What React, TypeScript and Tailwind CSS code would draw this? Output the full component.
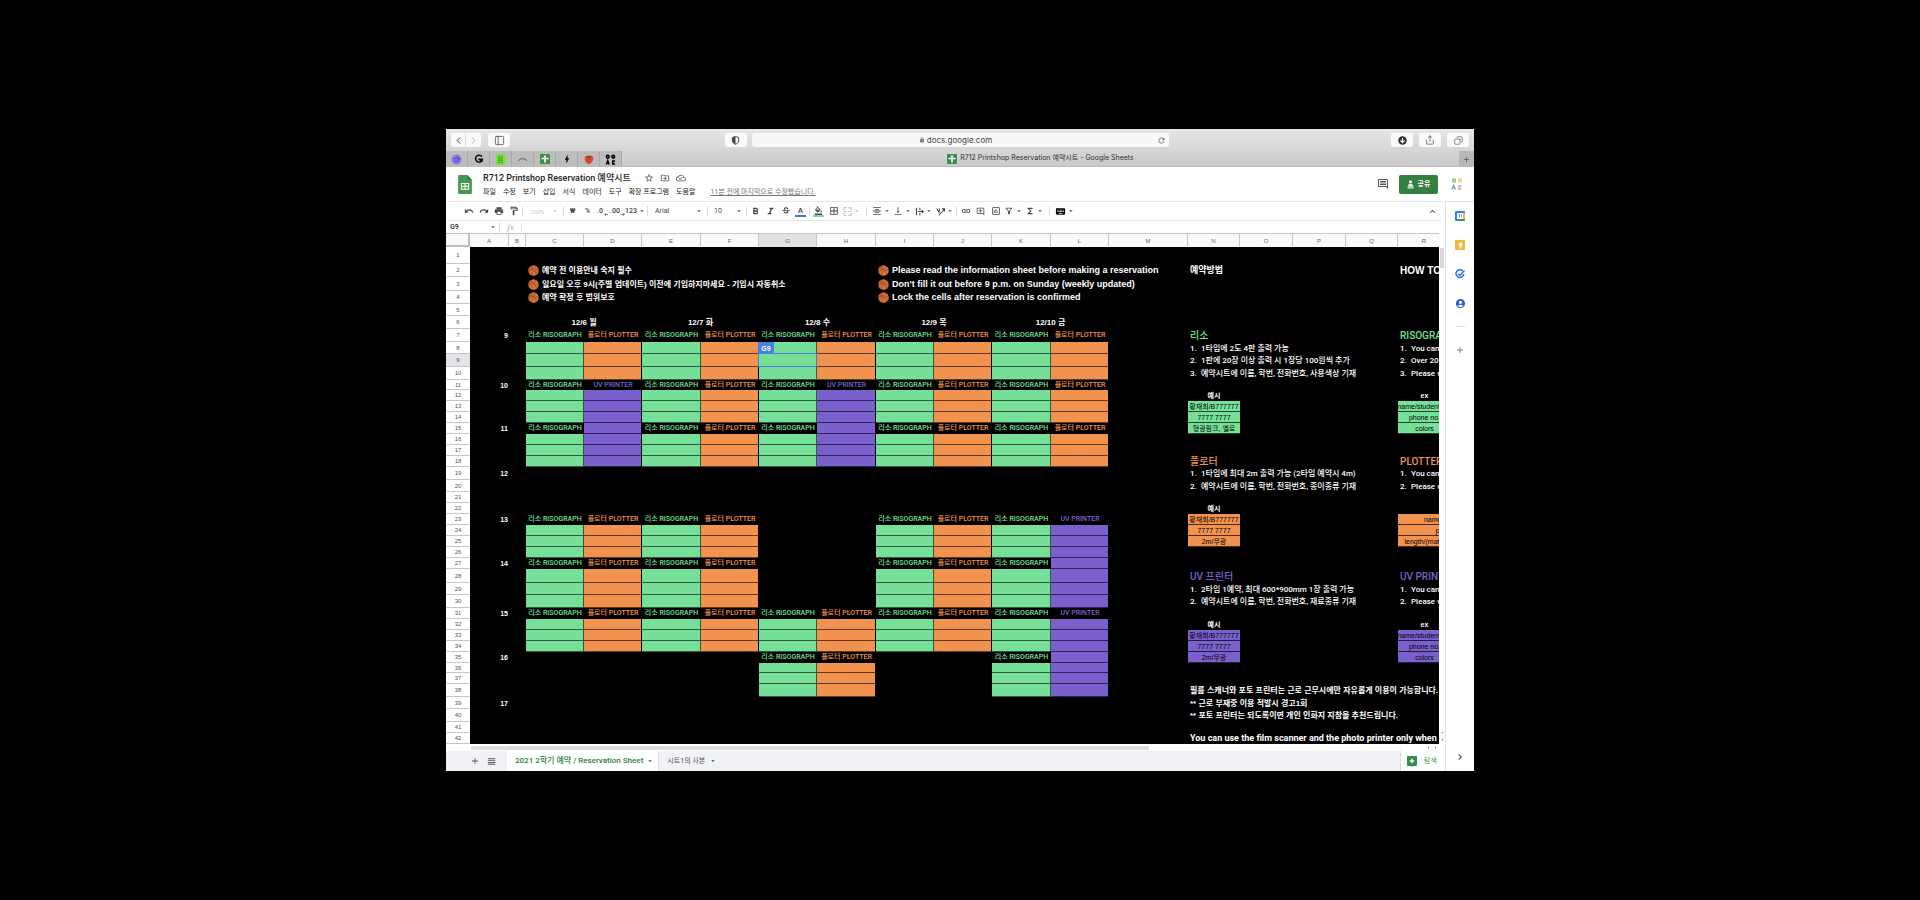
import React from "react";
import {
  MdUndo, MdRedo, MdPrint, MdOutlineFormatPaint, MdFormatBold, MdFormatItalic, MdStrikethroughS,
  MdFormatColorFill, MdBorderAll, MdFormatAlignCenter, MdVerticalAlignBottom, MdLink,
  MdOutlineAddComment, MdOutlineInsertChart, MdOutlineFilterAlt, MdFunctions, MdKeyboard,
  MdStarBorder, MdOutlineDriveFileMove, MdOutlineCloudDone, MdOutlineComment, MdKeyboardArrowUp,
  MdChevronRight, MdAdd, MdViewHeadline, MdArrowDropDown, MdLock, MdRefresh,
  MdAccountCircle, MdLightbulb, MdBolt,
} from "react-icons/md";
import { ChevronLeft, ChevronRight, Share, Copy, PanelLeft } from "lucide-react";

type Align = "left" | "center" | "right";
type Cell = { text?: React.ReactNode; cls?: string; span?: number; align?: Align; selected?: boolean };

const COLS = ["A", "B", "C", "D", "E", "F", "G", "H", "I", "J", "K", "L", "M", "N", "O", "P", "Q", "R", "S"];
const COL_WIDTHS = [39, 17, 58, 58, 59, 58, 58, 59, 58, 58, 59, 58, 79, 52, 53, 53, 52, 53, 53];
const ROW_HEIGHTS = [
  17, 13, 14, 13, 12, 13, 13, 12, 13, 13, 10, 11, 11, 11, 11, 11, 11, 11, 13, 12, 11, 11, 11, 11, 11, 11, 11, 14, 12,
  13, 11, 11, 11, 11, 11, 10, 11, 13, 12, 13, 11, 11,
];

const GREEN = "bg-[#76e099]";
const ORANGE = "bg-[#f2924f]";
const PURPLE = "bg-[#7a60cc]";

const SLOTS: { row: number; plan: string }[] = [
  { row: 7, plan: "rprprprprp" },
  { row: 11, plan: "rurprurprp" },
  { row: 15, plan: "rUrprUrprp" },
  { row: 23, plan: "rprp..rpru" },
  { row: 27, plan: "rprp..rprU" },
  { row: 31, plan: "rprprprpru" },
  { row: 35, plan: "....rp..rU" },
];

const HOURS: [number, string][] = [
  [7, "9"], [11, "10"], [15, "11"], [19, "12"], [23, "13"], [27, "14"], [31, "15"], [35, "16"], [39, "17"],
];

const Basketball = () => (
  <svg viewBox="0 0 20 20" className="size-[11px] shrink-0">
    <circle cx="10" cy="10" r="9.5" fill="#d9713a" />
    <path d="M3 4c5 1 11 6 13 13M1 11c6-2 12-4 14-9M6 18c0-6 5-10 13-9M8 1c-1 5-4 8-7 8" fill="none" stroke="#8a4424" strokeWidth="1.2" />
  </svg>
);

const Note = ({ children, size = "text-[9px]" }: { children: React.ReactNode; size?: string }) => (
  <span className={"flex items-center gap-[3px] pl-[2px] leading-[11px] font-bold " + size}>
    <Basketball />
    {children}
  </span>
);

const cells: Record<string, Cell> = {};
const put = (ref: string, cell: Cell) => {
  cells[ref] = cell;
};

HOURS.forEach(([row, text]) => put("A" + row, { text, align: "right", cls: "text-[7px] font-bold pr-[1px]" }));

const LABEL = "font-['Roboto','Noto_Sans_CJK_KR',sans-serif] text-[7px] font-medium ";

SLOTS.forEach(({ row, plan }) => {
  plan.split("").forEach((kind, i) => {
    const col = COLS[i + 2];
    if (kind === ".") return;
    if (kind === "r") put(col + row, { text: "리소 RISOGRAPH", align: "center", cls: LABEL + "text-[#76e099]" });
    if (kind === "p") put(col + row, { text: "플로터 PLOTTER", align: "center", cls: LABEL + "text-[#f2924f]" });
    if (kind === "u") put(col + row, { text: "UV PRINTER", align: "center", cls: LABEL + "text-[#7a60cc]" });
    if (kind === "U") put(col + row, { cls: PURPLE + " border-b border-r border-b-black/60 border-r-black" });
    [1, 2, 3].forEach((n) => {
      const fill =
        kind === "r"
          ? GREEN + " border-b border-r border-black/60"
          : (kind === "p" ? ORANGE : PURPLE) + " border-b border-r border-b-black/60 border-r-black";
      put(col + (row + n), { cls: fill, selected: col + (row + n) === "G9" });
    });
  });
});

["12/6 월", "12/7 화", "12/8 수", "12/9 목", "12/10 금"].forEach((text, i) =>
  put(COLS[2 + i * 2] + 6, { text, span: 2, align: "center", cls: "text-[8px] font-bold" }),
);

put("C2", { text: <Note size="text-[8px]">예약 전 이용안내 숙지 필수</Note> });
put("C3", { text: <Note size="text-[8px]">일요일 오후 9시(주별 업데이트) 이전에 기입하지마세요 - 기입시 자동취소</Note> });
put("C4", { text: <Note size="text-[8px]">예약 확정 후 범위보호</Note> });
put("I2", { text: <Note>Please read the information sheet before making a reservation</Note> });
put("I3", { text: <Note>Don't fill it out before 9 p.m. on Sunday (weekly updated)</Note> });
put("I4", { text: <Note>Lock the cells after reservation is confirmed</Note> });

const HEAD = "font-['Roboto','Noto_Sans_CJK_KR',sans-serif] text-[10px] font-medium pl-[2px]";
const LINE = "font-['Roboto','Noto_Sans_CJK_KR',sans-serif] text-[8px] font-medium pl-[2px]";
const BOLD = "text-[8px] font-bold pl-[2px]";
const item = (n: number, text: string) => (
  <span className="flex">
    <span className="w-[11px] shrink-0">{n}.</span>
    {text}
  </span>
);

put("N2", { text: "예약방법", cls: "text-[9px] font-bold pl-[2px]" });
put("R2", { text: "HOW TO", cls: "text-[10px] font-bold pl-[2px]" });

put("N7", { text: "리소", cls: HEAD + " text-[#76e099]" });
put("N8", { text: item(1, "1타임에 2도 4판 출력 가능"), cls: LINE });
put("N9", { text: item(2, "1판에 20장 이상 출력 시 1장당 100원씩 추가"), cls: LINE });
put("N10", { text: item(3, "예약시트에 이름, 학번, 전화번호, 사용색상 기재"), cls: LINE });
put("R7", { text: "RISOGRAPH", cls: HEAD + " text-[#76e099]" });
put("R8", { text: item(1, "You can print"), cls: LINE });
put("R9", { text: item(2, "Over 20 sheets"), cls: LINE });
put("R10", { text: item(3, "Please write"), cls: LINE });

put("N18", { text: "플로터", cls: HEAD + " text-[#f2924f]" });
put("N19", { text: item(1, "1타임에 최대 2m 출력 가능 (2타임 예약시 4m)"), cls: LINE });
put("N20", { text: item(2, "예약시트에 이름, 학번, 전화번호, 종이종류 기재"), cls: LINE });
put("R18", { text: "PLOTTER", cls: HEAD + " text-[#f2924f]" });
put("R19", { text: item(1, "You can print"), cls: LINE });
put("R20", { text: item(2, "Please write"), cls: LINE });

put("N28", { text: "UV 프린터", cls: HEAD + " text-[#7a60cc]" });
put("N29", { text: item(1, "2타임 1예약, 최대 600*900mm 1장 출력 가능"), cls: LINE });
put("N30", { text: item(2, "예약시트에 이름, 학번, 전화번호, 재료종류 기재"), cls: LINE });
put("R28", { text: "UV PRINTER", cls: HEAD + " text-[#7a60cc]" });
put("R29", { text: item(1, "You can print"), cls: LINE });
put("R30", { text: item(2, "Please write"), cls: LINE });

const SAMPLE = "text-[7px] text-black border-b border-black/70 ";
const example = (row: number, fill: string, ko: string[], en: string[], enSpan: number) => {
  put("N" + row, { text: "예시", align: "center", cls: "text-[7px] font-bold" });
  put("R" + row, { text: "ex", align: "center", span: enSpan, cls: "text-[7px] font-bold" });
  ko.forEach((text, i) => put("N" + (row + 1 + i), { text, align: "center", cls: SAMPLE + fill }));
  en.forEach((text, i) => put("R" + (row + 1 + i), { text, align: "center", span: enSpan, cls: SAMPLE + fill }));
};
example(12, GREEN, ["황재희/B777777", "7777 7777", "형광핑크, 옐로"], ["name/student no.", "phone no.", "colors"], 1);
example(22, ORANGE, ["황재희/B777777", "7777 7777", "2m/무광"], ["name/student no.", "phone no.", "length/(matte or glossy paper)"], 2);
put("R22", {});
example(32, PURPLE, ["황재희/B777777", "7777 7777", "2m/무광"], ["name/student no.", "phone no.", "colors"], 1);

put("N38", { text: "필름 스캐너와 포토 프린터는 근로 근무시에만 자유롭게 이용이 가능합니다.", cls: BOLD });
put("N39", { text: "** 근로 부재중 이용 적발시 경고1회", cls: BOLD });
put("N40", { text: "** 포토 프린터는 되도록이면 개인 인화지 지참을 추천드립니다.", cls: BOLD });
put("N42", {
  text: "You can use the film scanner and the photo printer only when assistants are here.",
  cls: "font-['Roboto',sans-serif] text-[9px] font-bold pl-[2px]",
});

const ALIGN: Record<Align, string> = { left: "text-left", center: "text-center", right: "text-right" };

function Row({ n }: { n: number }) {
  const out: React.ReactNode[] = [];
  for (let i = 0; i < COLS.length; i++) {
    const cell = cells[COLS[i] + n] ?? {};
    out.push(
      <td
        key={COLS[i]}
        colSpan={cell.span ?? 1}
        className={
          "p-0 leading-[9px] whitespace-nowrap " + ALIGN[cell.align ?? "left"] + " " + (cell.cls ?? "") + (cell.selected ? " relative" : "")
        }
      >
        {cell.align === "center" ? <span className="-mx-10 block">{cell.text}</span> : cell.text}
        {cell.selected && (
          <>
            <span className="absolute -inset-px border border-[#3f7fd9]" />
            <span className="absolute -left-px bottom-full grid h-[12px] w-[16px] place-items-center bg-[#4a80e0] text-[7px] font-bold text-white">G9</span>
          </>
        )}
      </td>,
    );
    i += (cell.span ?? 1) - 1;
  }
  return (
    <tr style={{ height: ROW_HEIGHTS[n - 1] }}>
      <th
        scope="row"
        className={
          "border-b border-[#c4c6c9] p-0 text-center text-[6px] leading-[8px] font-normal text-[#555] " + (n === 9 ? "bg-[#e3e5e9]" : "bg-white")
        }
      >
        {n}
      </th>
      {out}
    </tr>
  );
}

function Sheet() {
  return (
    <div className="min-w-0 flex-1 overflow-hidden bg-black">
      <table className="w-[1058px] table-fixed border-separate border-spacing-0 font-['Liberation_Sans','Noto_Sans_CJK_KR',sans-serif] text-white">
        <colgroup>
          <col style={{ width: 24 }} />
          {COL_WIDTHS.map((w, i) => (
            <col key={i} style={{ width: w }} />
          ))}
        </colgroup>
        <thead>
          <tr className="h-[14px]">
            <th className="border-t border-r-2 border-b-2 border-[#c0c0c0] bg-[#f8f9fa] p-0" aria-label="Select all" />
            {COLS.map((c) => (
              <th
                key={c}
                scope="col"
                className={
                  "border-t border-r border-[#c8c8c8] p-0 text-center text-[6px] leading-[8px] font-normal text-[#666] " +
                  (c === "G" ? "bg-[#e2e2e2]" : "bg-[#f8f9fa]")
                }
              >
                {c}
              </th>
            ))}
          </tr>
        </thead>
        <tbody>
          {ROW_HEIGHTS.map((_, i) => (
            <Row key={i} n={i + 1} />
          ))}
        </tbody>
      </table>
    </div>
  );
}

const Sep = ({ wide }: { wide?: boolean }) => (
  <span className={"h-[10px] w-px shrink-0 bg-[#dadce0] " + (wide ? "mx-[4px]" : "mx-px")} />
);
const Caret = ({ faint }: { faint?: boolean }) => <MdArrowDropDown className={"size-[8px] shrink-0 " + (faint ? "text-[#bbb]" : "text-[#444]")} />;

function Tool({ label, children, caret, faint }: { label: string; children: React.ReactNode; caret?: boolean; faint?: boolean }) {
  return (
    <button
      aria-label={label}
      className={
        "flex h-[15px] shrink-0 items-center justify-center gap-px text-[10px] " +
        (caret ? "w-[21px] " : "w-[15px] ") +
        (faint ? "text-[#bbb]" : "text-[#444]")
      }
    >
      {children}
      {caret && <Caret faint={faint} />}
    </button>
  );
}

function SafariButton({ label, children, cls = "w-[22px] rounded-[3px]" }: { label: string; children: React.ReactNode; cls?: string }) {
  return (
    <button aria-label={label} className={"grid h-[14px] place-items-center bg-[#fafafa] text-[#555] " + cls}>
      {children}
    </button>
  );
}

const SheetsFavicon = () => (
  <svg viewBox="0 0 10 10" className="size-[10px]">
    <rect width="10" height="10" rx="1" fill="#3c8f4c" />
    <path d="M5 1.5v7M1.5 4.5h7" stroke="#fff" strokeWidth="1.6" />
  </svg>
);

const PINNED: [string, React.ReactNode][] = [
  ["Swirl", <svg key="a" viewBox="0 0 12 12" className="size-[11px]"><circle cx="6" cy="6" r="5.5" fill="#8b7be0" /><path d="M3 5h4a1 1 0 0 1 0 3H4M6 3a3 3 0 0 1 3 3" fill="none" stroke="#5142b5" strokeWidth="1" /></svg>],
  ["G", <svg key="b" viewBox="0 0 12 12" className="size-[10px]"><path d="M9.5 3.2A4.2 4.2 0 1 0 10 7.2V6.4H6.5l3.2 3.2" fill="none" stroke="#111" strokeWidth="1.9" /></svg>],
  ["Naver", <svg key="c" viewBox="0 0 12 12" className="size-[11px]"><rect x="1" width="10" height="12" rx="1" fill="#74e23c" /><path d="M4 3h4v2.500h-4zM4 7h4v2.500h-4z" fill="none" stroke="#3fa51c" /></svg>],
  ["Arc", <svg key="d" viewBox="0 0 12 12" className="size-[11px]"><path d="M1 7.500q5-5 10 0" fill="none" stroke="#777" strokeWidth="1.200" /></svg>],
  ["Sheets", <SheetsFavicon key="e" />],
  ["Bolt", <MdBolt key="f" className="size-[10px] text-black" />],
  ["Tomato", <svg key="g" viewBox="0 0 12 12" className="size-[10px]"><path d="M1 4c1-3 9-3 10 0s-2 8-5 8-6-5-5-8z" fill="#d8482a" /><path d="M3 2l3 1.500 3-1.500-1.500 2.500h-3z" fill="#5a4a20" /></svg>],
  ["Board", (
    <svg key="h" viewBox="0 0 12 12" className="size-[11px]">
      <g fill="none" stroke="#000" strokeWidth="1.700">
        <circle cx="3" cy="3" r="1.500" /><circle cx="9" cy="3" r="1.500" />
        <path d="M1.500 11.500L3 7.500l1.500 4M11 7.700H8.500v3.200H11" />
      </g>
    </svg>
  )],
];

function Safari() {
  return (
    <div className="bg-gradient-to-b from-[#e6e6e6] to-[#c9c9c9] font-['Inter','Noto_Sans_CJK_KR',sans-serif]">
      <div className="grid h-[22px] grid-cols-[1fr_minmax(0,417px)_1fr] items-center gap-[5px] px-[5px]">
        <div className="flex items-center">
          <SafariButton label="Back" cls="w-[15px] rounded-l-[3px] border-r border-[#ddd]"><ChevronLeft className="size-[11px] text-[#333]" /></SafariButton>
          <SafariButton label="Forward" cls="w-[15px] rounded-r-[3px]"><ChevronRight className="size-[11px] text-[#aaa]" /></SafariButton>
          <span className="ml-[7px]"><SafariButton label="Sidebar"><PanelLeft className="size-[11px]" strokeWidth={1.8} /></SafariButton></span>
          <span className="ml-auto">
            <SafariButton label="Privacy">
              <svg viewBox="0 0 10 10" className="size-[9px]"><path d="M5 .6l3.500 1v4Q8 8 5 9.400 2 8 1.500 5.600v-4z" fill="none" stroke="#444" /><path d="M5 .6l-3.500 1v4Q2 8 5 9.400z" fill="#444" /></svg>
            </SafariButton>
          </span>
        </div>
        <div className="flex h-[14px] items-center rounded-[3px] bg-[#f8f8f8] px-[3px]">
          <span className="flex flex-1 items-center justify-center gap-[2px] text-[8px] leading-[10px] text-[#444]">
            <MdLock className="size-[6px] text-[#777]" />
            docs.google.com
          </span>
          <button aria-label="Reload"><MdRefresh className="size-[9px] text-[#666]" /></button>
        </div>
        <div className="flex items-center justify-end gap-[6px]">
          <SafariButton label="Downloads">
            <svg viewBox="0 0 10 10" className="size-[9px]"><circle cx="5" cy="5" r="4.700" fill="#333" /><path d="M5 2.200v5M2.800 5L5 7.300 7.200 5" fill="none" stroke="#fff" strokeWidth="1.300" /></svg>
          </SafariButton>
          <SafariButton label="Share"><Share className="size-[10px]" strokeWidth={1.8} /></SafariButton>
          <SafariButton label="Tabs"><Copy className="size-[9px] rotate-90" strokeWidth={1.8} /></SafariButton>
        </div>
      </div>
      <div className="flex h-[16px] items-stretch">
        {PINNED.map(([label, icon]) => (
          <button key={label} aria-label={label} className="grid w-[22px] place-items-center border-r border-[#a9a9a9] bg-[#bcbcbc]">{icon}</button>
        ))}
        <div className="flex flex-1 items-center justify-center gap-[3px] border-b border-[#bbb] text-[7px] text-[#333]">
          <SheetsFavicon />
          R712 Printshop Reservation 예약시트 - Google Sheets
        </div>
        <button aria-label="New tab" className="grid w-[15px] place-items-center bg-[#b8b8b8] text-[#555]"><MdAdd className="size-[9px]" /></button>
      </div>
    </div>
  );
}

function Header() {
  return (
    <header className="flex h-[34px] items-center pl-[12px] pr-[11px]">
      <svg viewBox="0 0 26 36" className="h-[19px] w-[14px] shrink-0">
        <path d="M2 0h15l9 9v25a2 2 0 0 1-2 2H2a2 2 0 0 1-2-2V2a2 2 0 0 1 2-2z" fill="#3f9a50" />
        <path d="M17 0l9 9h-9z" fill="#2b7a3c" />
        <path d="M6 16h14v11H6zM13 16v11M6 21.500h14" fill="none" stroke="#fff" strokeWidth="2" />
      </svg>
      <div className="ml-[11px] min-w-0 flex-1">
        <div className="flex h-[15px] items-center">
          <h1 className="text-[9px] leading-[14px] font-medium whitespace-nowrap text-[#222]">R712 Printshop Reservation 예약시트</h1>
          <div className="ml-[13px] flex gap-[6px] text-[#555]">
            <button aria-label="Star"><MdStarBorder className="size-[10px]" /></button>
            <button aria-label="Move"><MdOutlineDriveFileMove className="size-[10px]" /></button>
            <button aria-label="Saved"><MdOutlineCloudDone className="size-[10px]" /></button>
          </div>
        </div>
        <nav className="flex h-[13px] items-center gap-[7px] text-[7px] leading-[10px] whitespace-nowrap text-[#222]">
          {["파일", "수정", "보기", "삽입", "서식", "데이터", "도구", "확장 프로그램", "도움말"].map((m) => (
            <button key={m}>{m}</button>
          ))}
          <a href="#history" className="ml-[8px] text-[#777] underline">11분 전에 마지막으로 수정했습니다.</a>
        </nav>
      </div>
      <button aria-label="Comments"><MdOutlineComment className="size-[12px] text-[#555]" /></button>
      <button className="ml-[10px] flex h-[19px] w-[39px] items-center justify-center gap-[4px] rounded-[2px] bg-[#358040] text-[7px] font-bold text-white">
        <svg viewBox="0 0 8 10" className="h-[9px] w-[7px]"><circle cx="4" cy="2" r="1.800" fill="#fff" /><path d="M2 4.500h4l1.500 3h-7zM.5 8h7v1.500h-7z" fill="#fff" opacity=".85" /></svg>
        공유
      </button>
      <button aria-label="Account" className="ml-[13px]">
        <svg viewBox="0 0 12 14" className="h-[14px] w-[12px]" fill="none" strokeWidth="1.400">
          <circle cx="3" cy="3.500" r="1.500" stroke="#8cc084" /><circle cx="9" cy="3.500" r="1.500" stroke="#e8d070" />
          <path d="M1 12.500l1.700-4 1.700 4" stroke="#7f8fe0" /><path d="M10.500 9H8v3h2.500" stroke="#e08ae0" />
        </svg>
      </button>
    </header>
  );
}

function Toolbar() {
  return (
    <div className="mr-[3px] flex h-[20px] items-center border-y border-[#e4e5e7] pl-[15px] pr-[4px]">
      <Tool label="Undo"><MdUndo /></Tool>
      <Tool label="Redo"><MdRedo /></Tool>
      <Tool label="Print"><MdPrint /></Tool>
      <Tool label="Paint format"><MdOutlineFormatPaint /></Tool>
      <Sep />
      <button className="flex w-[38px] items-center justify-between pl-[6px] pr-[3px] text-[6px] text-[#ccc]">100%<Caret faint /></button>
      <Sep />
      <Tool label="Currency"><span className="text-[7px] font-bold">₩</span></Tool>
      <Tool label="Percent"><span className="text-[7px] font-medium">%</span></Tool>
      <Tool label="Decrease decimals">
        <span className="text-[7px] font-medium">.0</span>
        <svg viewBox="0 0 6 4" className="mt-[6px] h-[3px] w-[4px]"><path d="M6 2H1M3 0L1 2l2 2" fill="none" stroke="currentColor" /></svg>
      </Tool>
      <Tool label="Increase decimals">
        <span className="text-[7px] font-medium">.00</span>
        <svg viewBox="0 0 6 4" className="mt-[6px] h-[3px] w-[4px]"><path d="M0 2h5M3 0l2 2-2 2" fill="none" stroke="currentColor" /></svg>
      </Tool>
      <Tool label="Formats" caret><span className="text-[7px] font-medium">123</span></Tool>
      <Sep />
      <button className="flex w-[57px] items-center justify-between pl-[6px] pr-[3px] text-[7px] text-[#444]">Arial<Caret /></button>
      <Sep />
      <button className="flex w-[36px] items-center justify-between pl-[5px] pr-[2px] text-[7px] text-[#444]">10<Caret /></button>
      <Sep />
      <Tool label="Bold"><MdFormatBold className="size-[11px]" /></Tool>
      <Tool label="Italic"><MdFormatItalic className="size-[11px]" /></Tool>
      <Tool label="Strikethrough"><MdStrikethroughS /></Tool>
      <Tool label="Text color"><span className="w-[11px] border-b-2 border-[#3c78d8] text-[8px] leading-[9px] font-medium">A</span></Tool>
      <Sep />
      <Tool label="Fill color"><span className="grid w-[11px] place-items-center border-b-2 border-[#76e099]"><MdFormatColorFill className="size-[9px]" /></span></Tool>
      <Tool label="Borders"><MdBorderAll /></Tool>
      <Tool label="Merge" caret faint>
        <svg viewBox="0 0 12 12" className="size-[9px]" fill="none" stroke="currentColor" strokeWidth="1.300"><path d="M5 1H1v3M5 11H1V8M7 1h4v3M7 11h4V8M1 6h4M7 6h4" /></svg>
      </Tool>
      <Sep wide />
      <Tool label="Horizontal align" caret><MdFormatAlignCenter /></Tool>
      <Tool label="Vertical align" caret><MdVerticalAlignBottom /></Tool>
      <Tool label="Wrap" caret>
        <svg viewBox="0 0 12 12" className="size-[9px]" fill="none" stroke="currentColor" strokeWidth="1.400"><path d="M2 1v10M6.500 1v3M6.500 8v3M4 6h7M9 4l2 2-2 2" /></svg>
      </Tool>
      <Tool label="Rotate" caret>
        <svg viewBox="0 0 12 12" className="size-[9px]" fill="none" stroke="currentColor" strokeWidth="1.400"><path d="M1 2l3 5 1-5M4 11l7-8M8 2.500h3.500V6" /></svg>
      </Tool>
      <Sep />
      <Tool label="Link"><MdLink /></Tool>
      <Tool label="Comment"><MdOutlineAddComment className="size-[9px]" /></Tool>
      <Tool label="Chart"><MdOutlineInsertChart /></Tool>
      <Tool label="Filter" caret><MdOutlineFilterAlt /></Tool>
      <Tool label="Functions" caret><MdFunctions /></Tool>
      <Sep wide />
      <Tool label="Input tools" caret><MdKeyboard className="size-[11px] text-black" /></Tool>
      <button aria-label="Collapse" className="ml-auto"><MdKeyboardArrowUp className="size-[11px] text-[#444]" /></button>
    </div>
  );
}

function FormulaBar() {
  return (
    <div className="flex h-[12px] items-center text-[7px] leading-[9px]">
      <label className="flex w-[54px] items-center justify-between border-r border-[#dadce0] pl-[4px] pr-[2px] font-medium text-[#222]">
        <input aria-label="Cell" defaultValue="G9" className="w-[30px] bg-transparent outline-none" />
        <Caret />
      </label>
      <span className="w-[22px] border-r border-[#dadce0] text-center font-['Liberation_Serif',serif] text-[9px] leading-[9px] text-[#aaa] italic">fx</span>
      <input aria-label="Formula" className="min-w-0 flex-1 outline-none" />
    </div>
  );
}

function SidePanel() {
  return (
    <aside className="flex w-[29px] shrink-0 flex-col items-center border-l border-t border-[#dfe1e5] bg-white">
      <div className="flex w-full flex-col items-center gap-[19px] pt-[9px]">
        <button aria-label="Calendar">
          <svg viewBox="0 0 10 10" className="size-[10px]"><rect width="10" height="10" rx="1" fill="#3b7ded" /><path d="M8 2h2v6H8z" fill="#f5b92d" /><path d="M2 8h6v2H2z" fill="#34a253" /><path d="M2 2h6v6H2z" fill="#fff" /><path d="M3.500 3.500h1v3M5.500 3.500h1v3" fill="none" stroke="#3b7ded" strokeWidth=".7" /></svg>
        </button>
        <button aria-label="Keep" className="grid size-[10px] place-items-center rounded-[1px] bg-[#f3b73b] text-white"><MdLightbulb className="size-[7px]" /></button>
        <button aria-label="Tasks">
          <svg viewBox="0 0 10 10" className="size-[10px]" fill="none"><path d="M7.800 2A3.900 3.900 0 1 0 8.800 5" stroke="#2f6fe8" strokeWidth="1.500" /><path d="M3.200 4.800L5 6.400l4.500-5" stroke="#2f6fe8" strokeWidth="1.500" /></svg>
        </button>
        <button aria-label="Contacts"><MdAccountCircle className="size-[11px] text-[#2a62cf]" /></button>
      </div>
      <span className="mt-[17px] h-px w-[9px] bg-[#ddd]" />
      <button aria-label="Add-ons" className="mt-[18px]"><MdAdd className="size-[10px] text-[#777]" /></button>
      <button aria-label="Hide side panel" className="mt-auto mb-[8px]"><MdChevronRight className="size-[12px] text-[#444]" /></button>
    </aside>
  );
}

function BottomBar() {
  return (
    <div className="flex h-[20px] items-stretch bg-[#f1f2f6] leading-[10px]">
      <div className="flex w-[61px] items-center gap-[6px] pl-[24px] text-[#555]">
        <button aria-label="Add sheet"><MdAdd className="size-[10px]" /></button>
        <button aria-label="All sheets"><MdViewHeadline className="size-[11px]" /></button>
      </div>
      <button className="flex items-center gap-[3px] bg-white pl-[8px] pr-[4px] text-[8px] font-medium whitespace-nowrap text-[#2b7f3c]">2021 2학기 예약 / Reservation Sheet<Caret /></button>
      <button className="flex items-center gap-[4px] border-l border-[#ddd] px-[8px] text-[7px] whitespace-nowrap text-[#555]">시트1의 사본<Caret /></button>
      <button className="ml-auto flex w-[45px] items-center gap-[7px] border-l border-[#ddd] bg-white pl-[6px] text-[7px] text-[#3c9a50]">
        <svg viewBox="0 0 10 11" className="h-[11px] w-[10px]"><path d="M0 1a1 1 0 0 1 1-1h8a1 1 0 0 1 1 1v8a1 1 0 0 1-1 1H6l-1 1-1-1H1a1 1 0 0 1-1-1z" fill="#2f8f4a" /><path d="M5 2l.9 2.100L8 5l-2.100.9L5 8l-.9-2.100L2 5l2.100-.9z" fill="#fff" /></svg>
        탐색
      </button>
    </div>
  );
}

export default function App() {
  return (
    <div className="flex min-h-screen items-center justify-center bg-black">
      <main className="w-full max-w-[1028px] overflow-hidden bg-white font-['Roboto','Noto_Sans_CJK_KR',sans-serif]">
        <Safari />
        <Header />
        <div className="flex">
          <div className="flex min-w-0 flex-1 flex-col">
            <Toolbar />
            <FormulaBar />
            <div className="flex">
              <Sheet />
              <div className="flex w-[6px] shrink-0 flex-col items-center bg-white pt-[15px] pb-[1px]">
                <span className="h-[20px] w-[4px] bg-[#d8d8d8]" />
                <MdArrowDropDown className="mt-auto size-[7px] rotate-180 text-[#888]" />
                <MdArrowDropDown className="size-[7px] text-[#888]" />
              </div>
            </div>
            <div className="flex h-[7px] items-center pl-[25px] pr-[6px]">
              <span className="h-[4px] w-[70%] bg-[#dcdcdc]" />
              <MdArrowDropDown className="ml-auto size-[7px] rotate-90 text-[#888]" />
              <MdArrowDropDown className="size-[7px] -rotate-90 text-[#888]" />
            </div>
            <BottomBar />
          </div>
          <SidePanel />
        </div>
      </main>
    </div>
  );
}
